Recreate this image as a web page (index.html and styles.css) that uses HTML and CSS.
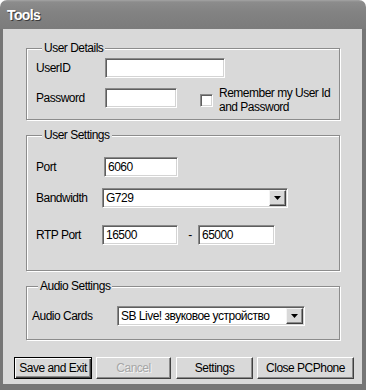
FILE: index.html
```html
<!DOCTYPE html>
<html lang="en">

<head>
  <meta charset="UTF-8">
  <title>Tools</title>
  <link rel="stylesheet" href="styles.css">
</head>

<body>
  <div class="window">
    <div class="titlebar">Tools</div>

    <div class="frame">
      <!-- user details -->
      <div class="group details">
        <div class="group-title">User Details</div>
        <div class="row first">
          <span class="label">UserID</span>
          <input class="field user-id" type="text" value="">
        </div>
        <div class="row second">
          <span class="label">Password</span>
          <input class="field password" type="password" value="">
          <div class="remember">
            <span class="check"></span>
            <span class="remember-text">Remember my User Id<br>and Password</span>
          </div>
        </div>
      </div>

      <!-- user settings -->
      <div class="group settings">
        <div class="group-title">User Settings</div>
        <div class="row port-row">
          <span class="label short">Port</span>
          <input class="field port" type="text" value="6060">
        </div>
        <div class="row band-row">
          <span class="label short">Bandwidth</span>
          <div class="select band">
            <span class="select-value">G729</span>
            <span class="select-btn"><svg width="7" height="4" viewBox="0 0 7 4"><polygon points="0,0 7,0 3.5,4" fill="#000"/></svg></span>
          </div>
        </div>
        <div class="row rtp-row">
          <span class="label short">RTP Port</span>
          <input class="field rtp" type="text" value="16500">
          <span class="dash">-</span>
          <input class="field rtp-end" type="text" value="65000">
        </div>
      </div>

      <!-- audio settings -->
      <div class="group audio">
        <div class="group-title">Audio Settings</div>
        <div class="row audio-row">
          <span class="label wide">Audio Cards</span>
          <div class="select cards">
            <span class="select-value">SB Live! звуковое устройство</span>
            <span class="select-btn"><svg width="7" height="4" viewBox="0 0 7 4"><polygon points="0,0 7,0 3.5,4" fill="#000"/></svg></span>
          </div>
        </div>
      </div>

      <div class="buttons">
        <button class="btn default save">Save and Exit</button>
        <button class="btn cancel" disabled>Cancel</button>
        <button class="btn settings-btn">Settings</button>
        <button class="btn close">Close PCPhone</button>
      </div>
    </div>
  </div>
</body>

</html>
```

FILE: styles.css
```css
* {
  padding: 0;
  margin: 0;
  box-sizing: border-box
}

body {
  width: 366px;
  height: 390px;
  overflow: hidden;
  background: #fff;
  font-family: "Liberation Sans", Arial, sans-serif;
  font-size: 12px;
  letter-spacing: -0.5px;
  color: #000;
}

.window {
  width: 366px;
  height: 390px;
  display: flex;
  flex-direction: column;
}

.titlebar {
  flex: none;
  height: 29px;
  padding-left: 7px;
  display: flex;
  align-items: center;
  border-radius: 7px 7px 0 0;
  background: linear-gradient(#a4a4a4 0, #8c8c8c 2px, #838383 40%, #7b7b7b 100%);
  color: #fff;
  font-weight: bold;
  font-size: 14px;
  letter-spacing: -0.6px;
  text-shadow: 1px 1px 0 #3a3a3a;
}

.frame {
  flex: 1;
  background: #d9d9d9;
  border: solid #767676;
  border-width: 0 4px 6px 3px;
  padding: 19px 0 0 11px;
}

/* group boxes */
.group {
  width: 314px;
  margin-left: 12px;
  border: 1px solid #8c8c8c;
  box-shadow: inset 1px 1px 0 #fff, 1px 1px 0 #fff;
}

.group-title {
  width: max-content;
  height: 14px;
  line-height: 14px;
  margin: -8px 0 0 6px;
  padding: 0 2px;
  background: #d9d9d9;
}

.details {
  height: 72px;
  padding-left: 9px;
}

.settings {
  height: 136px;
  padding-left: 9px;
  margin-top: 15px;
}

.audio {
  height: 54px;
  padding-left: 5px;
  margin-top: 15px;
}

.row {
  display: flex;
  align-items: center;
  white-space: nowrap;
}

.label {
  flex: none;
  width: 69px;
}

.label.short {
  width: 66px;
}

.label.wide {
  width: 85px;
}

.first {
  margin-top: 3px;
}

.second {
  margin-top: 10px;
  align-items: flex-start;
}

.second .label {
  line-height: 20px;
}

.port-row {
  margin-top: 15px;
}

.band-row {
  margin-top: 11px;
}

.rtp-row {
  margin-top: 17px;
}

.audio-row {
  margin-top: 13px;
}

/* sunken edit boxes */
.field {
  height: 20px;
  background: #fff;
  border: 1px solid;
  border-color: #8a8a8a #fff #fff #8a8a8a;
  box-shadow: inset 1px 1px 0 #5e5e5e, inset -1px -1px 0 #d4d4d4;
  padding: 0 0 0 3px;
  font: inherit;
  letter-spacing: inherit;
  color: #000;
  outline: none;
}

.user-id {
  width: 120px;
}

.password {
  width: 72px;
}

.port {
  width: 74px;
  margin-left: 2px;
}

.rtp {
  width: 76px;
}

.rtp-end {
  width: 77px;
}

.dash {
  width: 20px;
  text-align: center;
  padding-left: 4px;
}

.remember {
  display: flex;
  align-items: center;
  gap: 6px;
  margin: -2px 0 0 23px;
}

.check {
  flex: none;
  width: 13px;
  height: 13px;
  background: #fff;
  border: 1px solid;
  border-color: #8a8a8a #fff #fff #8a8a8a;
  box-shadow: inset 1px 1px 0 #5e5e5e, inset -1px -1px 0 #d4d4d4;
}

.remember-text {
  line-height: 14px;
}

/* drop down lists */
.select {
  display: flex;
  height: 20px;
  background: #fff;
  border: 1px solid;
  border-color: #8a8a8a #fff #fff #8a8a8a;
  box-shadow: inset 1px 1px 0 #5e5e5e, inset -1px -1px 0 #d4d4d4;
  padding: 1px;
}

.band {
  width: 186px;
}

.cards {
  width: 188px;
}

.select-value {
  flex: 1;
  padding-left: 2px;
  line-height: 16px;
  white-space: nowrap;
  overflow: hidden;
}

.select-btn {
  flex: none;
  width: 17px;
  display: flex;
  align-items: center;
  justify-content: center;
  background: #d9d9d9;
  border: 1px solid;
  border-color: #f4f4f4 #404040 #404040 #f4f4f4;
  box-shadow: inset -1px -1px 0 #8a8a8a;
}

/* buttons */
.buttons {
  display: flex;
  gap: 4px;
  margin-top: 17px;
}

.btn {
  height: 22px;
  padding: 0;
  white-space: nowrap;
  background: #d9d9d9;
  border: 1px solid;
  border-color: #fff #404040 #404040 #fff;
  box-shadow: inset -1px -1px 0 #8a8a8a;
  font: inherit;
  letter-spacing: inherit;
  color: #000;
}

.btn.default {
  border-color: #000;
  box-shadow: inset 1px 1px 0 #fff, inset -1px -1px 0 #404040, inset -2px -2px 0 #8a8a8a;
}

.save {
  width: 78px;
}

.cancel {
  width: 75px;
  color: #a6a6a6;
  text-shadow: 1px 1px 0 #f4f4f4;
}

.settings-btn {
  width: 77px;
  margin-left: 1px;
}

.close {
  width: 97px;
}
```
